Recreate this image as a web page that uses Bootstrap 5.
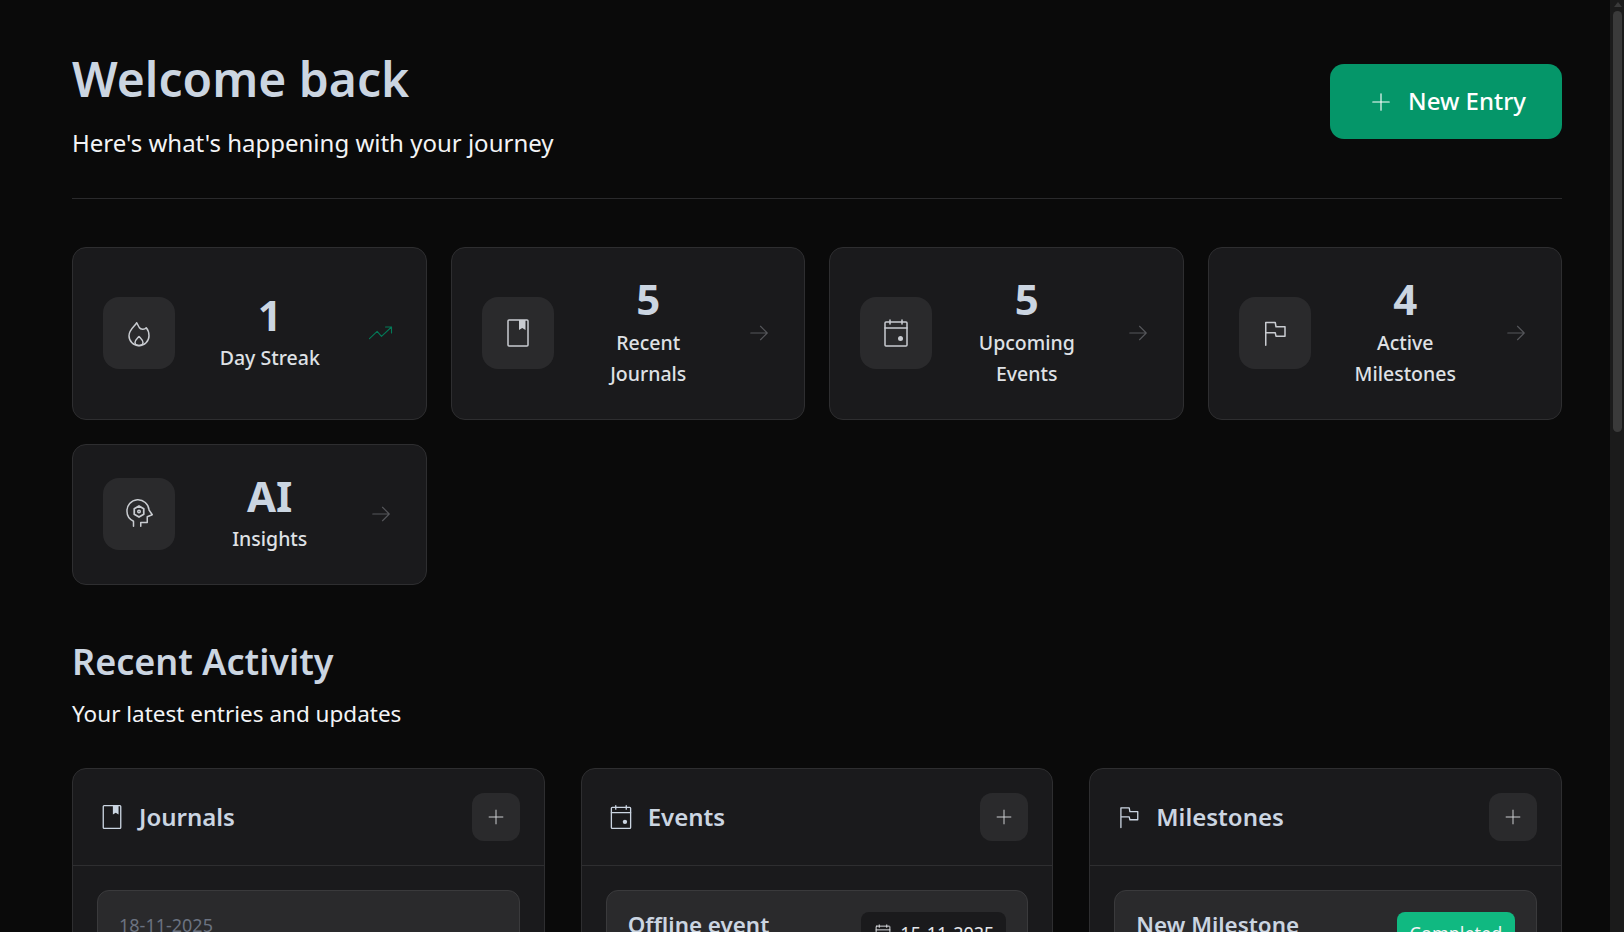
<!DOCTYPE html>
<html lang="en"><head><meta charset="utf-8"><title>Dashboard</title>
<link href="https://cdn.jsdelivr.net/npm/bootstrap@5.3.0/dist/css/bootstrap.min.css" rel="stylesheet">
<style>
html{background:#0a0a0a}
body{background:#0a0a0a;font-family:"Noto Sans",sans-serif;color:#e5e7eb;line-height:1.7}
svg{display:block;flex:none}
.ln{fill:none;stroke:currentColor;stroke-width:12;stroke-linecap:round;stroke-linejoin:round}
.ln-b{stroke-width:14}
.fl{fill:currentColor}
.shell{height:100vh}
.page{padding:48px 48px 48px 72px;min-width:0}
.rail{width:14px;background:#1b1b1b;flex:none;padding:2px 2px 0 3px}
.rail-up{width:0;height:0;border-left:4px solid transparent;border-right:4px solid transparent;border-bottom:5px solid #3a3a3a;margin:0 0 4px 1px}
.rail-thumb{height:421px;background:#3a3a3a;border-radius:5px}
.head-row{padding-bottom:34px;border-bottom:1px solid #2a2a2c;margin-bottom:48px}
.page-title{font-size:48px;font-weight:600;color:#cbd5e1;line-height:1.3;margin:0 0 13px}
.page-sub{font-size:24px;line-height:1.7;color:#f3f4f6;margin:0}
.new-btn{background:#059669;color:#fff;font-size:24px;font-weight:500;padding:16px 36px 16px 39px;border:0;border-radius:14px;gap:15px;line-height:1.7;height:75px;margin-top:16px}
.new-btn:hover{background:#059669;color:#fff}
.stat-grid{display:grid;grid-template-columns:repeat(4,1fr);gap:24px;margin-bottom:54px}
.stat-tile{background:#1a1a1c;border:1px solid #2e2e30;border-radius:14px;padding:30px 29px 30px 30px;gap:24px}
.icon-box{width:72px;height:72px;background:#2a2a2c;border-radius:16px;color:#c9ccd1;flex:none;margin-bottom:1px}
.stat-num{font-size:42px;font-weight:700;line-height:41px;margin-bottom:7.5px;color:#cbd5e1}
.stat-label{font-size:19.5px;font-weight:500;line-height:31px;color:#dfe1e5}
.go{width:32px;color:#55565a;flex:none}
.go.up{color:#047857}
.sec-title{font-size:36px;font-weight:600;line-height:1.3;color:#cbd5e1;margin:0 0 9px}
.sec-sub{font-size:22.5px;line-height:38px;color:#f3f4f6;margin:0 0 35px}
.act-grid{display:grid;grid-template-columns:repeat(3,1fr);gap:36px}
.act-card{background:#1a1a1c;border:1px solid #2e2e30;border-radius:14px}
.act-head{padding:24px 24px 24px 25px;height:97px;border-bottom:1px solid #2e2e30;color:#cbd5e1}
.act-name{gap:13px}
.act-title{font-size:24px;font-weight:600;color:#cbd5e1;margin:0;line-height:1.2}
.add-btn{width:48px;height:48px;background:#2a2a2c;border:0;border-radius:12px;color:#d5d7db;padding:0}
.add-btn:hover{background:#2a2a2c;color:#d5d7db}
.act-body{padding:24px}
.act-item{background:#2a2a2c;border:1px solid #3a3a3c;border-radius:12px;padding:21px;min-height:200px}
.item-date{font-size:18px;color:#6b7280;line-height:1.5}
.item-title{font-size:22.4px;font-weight:600;color:#cbd5e1;line-height:25px}
.chip{background:#1a1a1c;border-radius:8px;color:#e5e7eb;font-size:18px;padding:6px 12px;gap:7px;line-height:1.7}
.chip-ok{background:#10b981;border-radius:8px;color:#f3f4f6;font-size:18px;padding:6px 12.7px;line-height:1.7}
</style></head><body>
<svg width="0" height="0" class="position-absolute"><defs>
<symbol id="i-book" viewBox="0 0 256 256"><rect class="ln" x="48" y="24" width="160" height="208" rx="8"/><path class="fl" d="M136 24h52v80l-26-16-26 16z"/></symbol>
<symbol id="i-cal" viewBox="0 0 256 256"><rect class="ln" x="40" y="40" width="176" height="192" rx="8"/><path class="ln" d="M176 24v32M80 24v32M40 88h176"/><circle class="fl" cx="164" cy="172" r="20"/></symbol>
<symbol id="i-flag" viewBox="0 0 256 256"><path class="ln" d="M54 225V44H130L136 78H208V153H136L130 126H54"/></symbol>
<symbol id="i-fire" viewBox="0 0 256 256"><path class="ln" d="M110 46C92 76 48 100 48 150A80 80 0 0 0 208 150C208 122 198 100 186 86C172 104 140 100 130 84C122 70 116 58 110 46Z"/><path class="ln" d="M128 156C112 174 96 186 96 204C96 216 110 228 128 228C146 228 160 216 160 204C160 186 144 174 128 156Z"/></symbol>
<symbol id="i-head" viewBox="0 0 256 256"><path class="ln" d="M84 226V186C52 170 32 140 32 108A88 88 0 0 1 208 96L234 134L194 150V196H142V226"/><circle class="ln" cx="128" cy="108" r="10"/><path class="ln ln-b" d="M128 64L166 86V130L128 152L90 130V86Z"/></symbol>
<symbol id="i-arrow" viewBox="0 0 256 256"><path class="ln" d="M40 128H216M144 56L216 128L144 200"/></symbol>
<symbol id="i-plus" viewBox="0 0 256 256"><path class="ln" d="M40 128H216M128 40V216"/></symbol>
<symbol id="i-trend" viewBox="0 0 256 256"><path class="ln" d="M5 188L87 110L133 164L240 64M176 64H240V128"/></symbol>
</defs></svg>
<div class="shell d-flex overflow-hidden">
<main class="page flex-grow-1 overflow-hidden">
<header class="head-row d-flex justify-content-between align-items-start">
<div><h1 class="page-title">Welcome back</h1><p class="page-sub">Here's what's happening with your journey</p></div>
<button class="btn new-btn d-flex align-items-center"><svg width="24" height="24"><use href="#i-plus"/></svg>New Entry</button>
</header>
<section class="stat-grid">
<div class="stat-tile d-flex align-items-center"><div class="icon-box d-flex align-items-center justify-content-center"><svg width="32" height="32"><use href="#i-fire"/></svg></div><div class="flex-grow-1 text-center"><div class="stat-num">1</div><div class="stat-label">Day Streak</div></div><div class="go up d-flex justify-content-center"><svg width="24" height="24"><use href="#i-trend"/></svg></div></div>
<div class="stat-tile d-flex align-items-center"><div class="icon-box d-flex align-items-center justify-content-center"><svg width="32" height="32"><use href="#i-book"/></svg></div><div class="flex-grow-1 text-center"><div class="stat-num">5</div><div class="stat-label">Recent<br>Journals</div></div><div class="go d-flex justify-content-center"><svg width="24" height="24"><use href="#i-arrow"/></svg></div></div>
<div class="stat-tile d-flex align-items-center"><div class="icon-box d-flex align-items-center justify-content-center"><svg width="32" height="32"><use href="#i-cal"/></svg></div><div class="flex-grow-1 text-center"><div class="stat-num">5</div><div class="stat-label">Upcoming<br>Events</div></div><div class="go d-flex justify-content-center"><svg width="24" height="24"><use href="#i-arrow"/></svg></div></div>
<div class="stat-tile d-flex align-items-center"><div class="icon-box d-flex align-items-center justify-content-center"><svg width="32" height="32"><use href="#i-flag"/></svg></div><div class="flex-grow-1 text-center"><div class="stat-num">4</div><div class="stat-label">Active<br>Milestones</div></div><div class="go d-flex justify-content-center"><svg width="24" height="24"><use href="#i-arrow"/></svg></div></div>
<div class="stat-tile d-flex align-items-center"><div class="icon-box d-flex align-items-center justify-content-center"><svg width="32" height="32"><use href="#i-head"/></svg></div><div class="flex-grow-1 text-center"><div class="stat-num">AI</div><div class="stat-label">Insights</div></div><div class="go d-flex justify-content-center"><svg width="24" height="24"><use href="#i-arrow"/></svg></div></div>
</section>
<h2 class="sec-title">Recent Activity</h2>
<p class="sec-sub">Your latest entries and updates</p>
<section class="act-grid">
<div class="act-card"><div class="act-head d-flex justify-content-between align-items-center"><div class="act-name d-flex align-items-center"><svg width="28" height="28"><use href="#i-book"/></svg><h3 class="act-title">Journals</h3></div><button class="btn add-btn d-flex align-items-center justify-content-center"><svg width="20" height="20"><use href="#i-plus"/></svg></button></div><div class="act-body"><div class="act-item"><div class="item-date">18-11-2025</div></div></div></div>
<div class="act-card"><div class="act-head d-flex justify-content-between align-items-center"><div class="act-name d-flex align-items-center"><svg width="28" height="28"><use href="#i-cal"/></svg><h3 class="act-title">Events</h3></div><button class="btn add-btn d-flex align-items-center justify-content-center"><svg width="20" height="20"><use href="#i-plus"/></svg></button></div><div class="act-body"><div class="act-item"><div class="d-flex justify-content-between align-items-start"><div class="item-title">Offline event</div><div class="chip d-flex align-items-center"><svg width="20" height="20"><use href="#i-cal"/></svg>15-11-2025</div></div></div></div></div>
<div class="act-card"><div class="act-head d-flex justify-content-between align-items-center"><div class="act-name d-flex align-items-center"><svg width="28" height="28"><use href="#i-flag"/></svg><h3 class="act-title">Milestones</h3></div><button class="btn add-btn d-flex align-items-center justify-content-center"><svg width="20" height="20"><use href="#i-plus"/></svg></button></div><div class="act-body"><div class="act-item"><div class="d-flex justify-content-between align-items-start"><div class="item-title">New Milestone</div><div class="chip-ok">Completed</div></div></div></div></div>
</section>
</main>
<div class="rail" aria-hidden="true"><div class="rail-up"></div><div class="rail-thumb"></div></div>
</div>
<script src="https://cdn.jsdelivr.net/npm/bootstrap@5.3.0/dist/js/bootstrap.bundle.min.js"></script>
</body></html>
